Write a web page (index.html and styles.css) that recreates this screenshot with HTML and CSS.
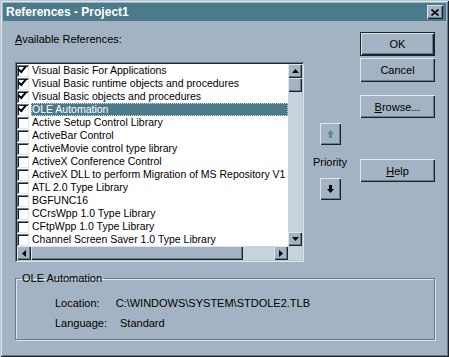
FILE: index.html
```html
<!DOCTYPE html>
<html lang="en">
<head>
    <meta charset="UTF-8">
    <meta name="viewport" content="width=device-width, initial-scale=1.0">
    <title>References - Project1</title>
    <link rel="stylesheet" href="styles.css">
</head>
<body>
    <div class="window">
        <div class="titlebar">
            <span class="title">References - Project1</span>
            <button class="close" aria-label="Close">
                <svg width="8" height="7" viewBox="0 0 8 7"><path d="M0.5 0.5 L7.5 6.5 M7.5 0.5 L0.5 6.5" stroke="#000" stroke-width="1.6"/></svg>
            </button>
        </div>

        <div class="content">
            <div class="top">
                <div class="refs">
                    <div class="label"><u>A</u>vailable References:</div>
                    <div class="listbox">
                        <ul class="items">
                            <li><span class="check on"></span><span class="name">Visual Basic For Applications</span></li>
                            <li><span class="check on"></span><span class="name">Visual Basic runtime objects and procedures</span></li>
                            <li><span class="check on"></span><span class="name">Visual Basic objects and procedures</span></li>
                            <li class="selected"><span class="check on"></span><span class="name">OLE Automation</span></li>
                            <li><span class="check"></span><span class="name">Active Setup Control Library</span></li>
                            <li><span class="check"></span><span class="name">ActiveBar Control</span></li>
                            <li><span class="check"></span><span class="name">ActiveMovie control type library</span></li>
                            <li><span class="check"></span><span class="name">ActiveX Conference Control</span></li>
                            <li><span class="check"></span><span class="name">ActiveX DLL to perform Migration of MS Repository V1</span></li>
                            <li><span class="check"></span><span class="name">ATL 2.0 Type Library</span></li>
                            <li><span class="check"></span><span class="name">BGFUNC16</span></li>
                            <li><span class="check"></span><span class="name">CCrsWpp 1.0 Type Library</span></li>
                            <li><span class="check"></span><span class="name">CFtpWpp 1.0 Type Library</span></li>
                            <li><span class="check"></span><span class="name">Channel Screen Saver 1.0 Type Library</span></li>
                        </ul>
                        <div class="vscroll">
                            <span class="sbtn"><svg width="7" height="4" viewBox="0 0 7 4"><path d="M3.5 0 L7 4 L0 4 Z" fill="#000"/></svg></span>
                            <span class="thumb"></span>
                            <span class="track"></span>
                            <span class="sbtn"><svg width="7" height="4" viewBox="0 0 7 4"><path d="M0 0 L7 0 L3.5 4 Z" fill="#000"/></svg></span>
                        </div>
                        <div class="hscroll">
                            <span class="sbtn"><svg width="4" height="7" viewBox="0 0 4 7"><path d="M4 0 L4 7 L0 3.5 Z" fill="#000"/></svg></span>
                            <span class="thumb"></span>
                            <span class="track"></span>
                            <span class="sbtn"><svg width="4" height="7" viewBox="0 0 4 7"><path d="M0 0 L4 3.5 L0 7 Z" fill="#000"/></svg></span>
                        </div>
                        <div class="corner"></div>
                    </div>
                </div>

                <div class="priority">
                    <button class="arrow-btn disabled" aria-label="Move up">
                        <svg width="7" height="8" viewBox="0 0 7 8"><path d="M3.5 0 L7 4 L5 4 L5 8 L2 8 L2 4 L0 4 Z" fill="#5f8a98"/></svg>
                    </button>
                    <span class="priority-label">Priority</span>
                    <button class="arrow-btn" aria-label="Move down">
                        <svg width="7" height="8" viewBox="0 0 7 8"><path d="M2 0 L5 0 L5 4 L7 4 L3.5 8 L0 4 L2 4 Z" fill="#000"/></svg>
                    </button>
                </div>

                <div class="actions">
                    <button class="btn default">OK</button>
                    <button class="btn">Cancel</button>
                    <button class="btn browse"><u>B</u>rowse...</button>
                    <button class="btn help"><u>H</u>elp</button>
                </div>
            </div>

            <fieldset class="details">
                <legend>OLE Automation</legend>
                <div class="row"><span class="key">Location:</span><span class="value">C:\WINDOWS\SYSTEM\STDOLE2.TLB</span></div>
                <div class="row"><span class="key">Language:</span><span class="value lang">Standard</span></div>
            </fieldset>
        </div>
    </div>
</body>
</html>
```

FILE: styles.css
```css
* {
    margin: 0;
    padding: 0;
    box-sizing: border-box;
}

body {
    font-family: 'Liberation Sans', Arial, sans-serif;
    font-size: 10.5px;
    color: #000;
    background-color: #a3b3c3;
    width: 449px;
    height: 357px;
    overflow: hidden;
}

u {
    text-decoration: underline;
    text-underline-offset: 1px;
}

.window {
    width: 449px;
    height: 357px;
    padding: 3px;
    background-color: #a3b3c3;
    box-shadow: inset 1px 1px #b9c7d3, inset -1px -1px #1b2228,
                inset 2px 2px #dbe5ec, inset -2px -2px #6b7b8b;
}

.titlebar {
    height: 18px;
    display: flex;
    align-items: center;
    justify-content: space-between;
    padding: 0 3px 0 3px;
    background-color: #4b7b8b;
}

.title {
    color: #fff;
    font-weight: 700;
    font-size: 12px;
}

.close {
    width: 16px;
    height: 14px;
    border: none;
    display: flex;
    align-items: center;
    justify-content: center;
    background-color: #a3b3c3;
    box-shadow: inset 1px 1px #dbe5ec, inset -1px -1px #1b2228,
                inset -2px -2px #6b7b8b;
}

.content {
    padding: 11px 0 0 12px;
}

.top {
    display: flex;
    align-items: flex-start;
}

/* list of references */
.refs {
    width: 289px;
}

.label {
    height: 15px;
    line-height: 15px;
    margin-bottom: 15px;
    font-size: 11px;
}

.listbox {
    height: 200px;
    padding: 2px;
    background-color: #fff;
    display: grid;
    grid-template-columns: 1fr 14px;
    grid-template-rows: 1fr 14px;
    box-shadow: inset 1px 1px #6b7b8b, inset -1px -1px #dbe5ec,
                inset 2px 2px #1b2228, inset -2px -2px #b9c7d3;
}

.items {
    list-style: none;
    overflow: hidden;
}

.items li {
    height: 13px;
    display: flex;
    align-items: center;
    white-space: nowrap;
}

.check {
    flex: none;
    width: 12px;
    height: 12px;
    margin-right: 2px;
    background-color: #fff;
    box-shadow: inset 1px 1px #6b7b8b, inset -1px -1px #dbe5ec,
                inset 2px 2px #1b2228;
    position: relative;
}

.check.on::after {
    content: '';
    position: absolute;
    left: 3px;
    top: 2px;
    width: 6px;
    height: 3px;
    border-left: 2px solid #000;
    border-bottom: 2px solid #000;
    transform: rotate(-50deg);
    transform-origin: 2px 4px;
}

.name {
    padding: 0 1px;
    line-height: 13px;
}

.selected .name {
    flex: 1;
    color: #fff;
    background-color: #4b7b8b;
    outline: 1px dotted #cfd9e0;
    outline-offset: -1px;
}

/* scroll bars */
.vscroll, .hscroll {
    display: flex;
    background-color: #c7d3db;
}

.vscroll {
    flex-direction: column;
}

.sbtn, .thumb {
    flex: none;
    width: 14px;
    height: 14px;
    display: flex;
    align-items: center;
    justify-content: center;
    background-color: #a3b3c3;
    box-shadow: inset 1px 1px #dbe5ec, inset -1px -1px #1b2228,
                inset -2px -2px #6b7b8b;
}

.hscroll .thumb {
    width: 212px;
}

.track {
    flex: 1;
}

.corner {
    background-color: #c7d3db;
}

/* priority */
.priority {
    width: 36px;
    margin-left: 8px;
    padding-top: 91px;
    display: flex;
    flex-direction: column;
    align-items: center;
}

.arrow-btn {
    width: 21px;
    height: 22px;
    border: none;
    display: flex;
    align-items: center;
    justify-content: center;
    background-color: #a3b3c3;
    box-shadow: inset 1px 1px #dbe5ec, inset -1px -1px #1b2228,
                inset -2px -2px #6b7b8b;
}

.priority-label {
    margin: 10px 0 9px;
    line-height: 14px;
    font-size: 11px;
}

/* command buttons */
.actions {
    width: 75px;
    margin-left: 12px;
    display: flex;
    flex-direction: column;
}

.btn {
    height: 24px;
    border: none;
    font-family: inherit;
    font-size: 11px;
    color: #000;
    background-color: #a3b3c3;
    box-shadow: inset 1px 1px #dbe5ec, inset -1px -1px #1b2228,
                inset -2px -2px #6b7b8b;
}

.btn.default {
    margin-bottom: 2px;
    box-shadow: inset 0 0 0 1px #1b2228, inset 2px 2px #dbe5ec,
                inset -2px -2px #1b2228, inset -3px -3px #6b7b8b;
}

.btn.browse {
    height: 23px;
    margin-top: 13px;
}

.btn.help {
    height: 23px;
    margin-top: 41px;
}

/* details group */
.details {
    width: 420px;
    height: 69px;
    margin-top: 9px;
    padding: 8px 0 0 0;
    border: 1px solid #6b7b8b;
    box-shadow: 1px 1px #dbe5ec, inset 1px 1px #dbe5ec;
}

.details legend {
    margin-left: 4px;
    padding: 0 2px;
    line-height: 14px;
    font-size: 11px;
}

.row {
    display: flex;
    height: 20px;
    padding-left: 39px;
    align-items: center;
    font-size: 11px;
}

.value {
    margin-left: 16px;
}

.value.lang {
    margin-left: 13px;
}
```
